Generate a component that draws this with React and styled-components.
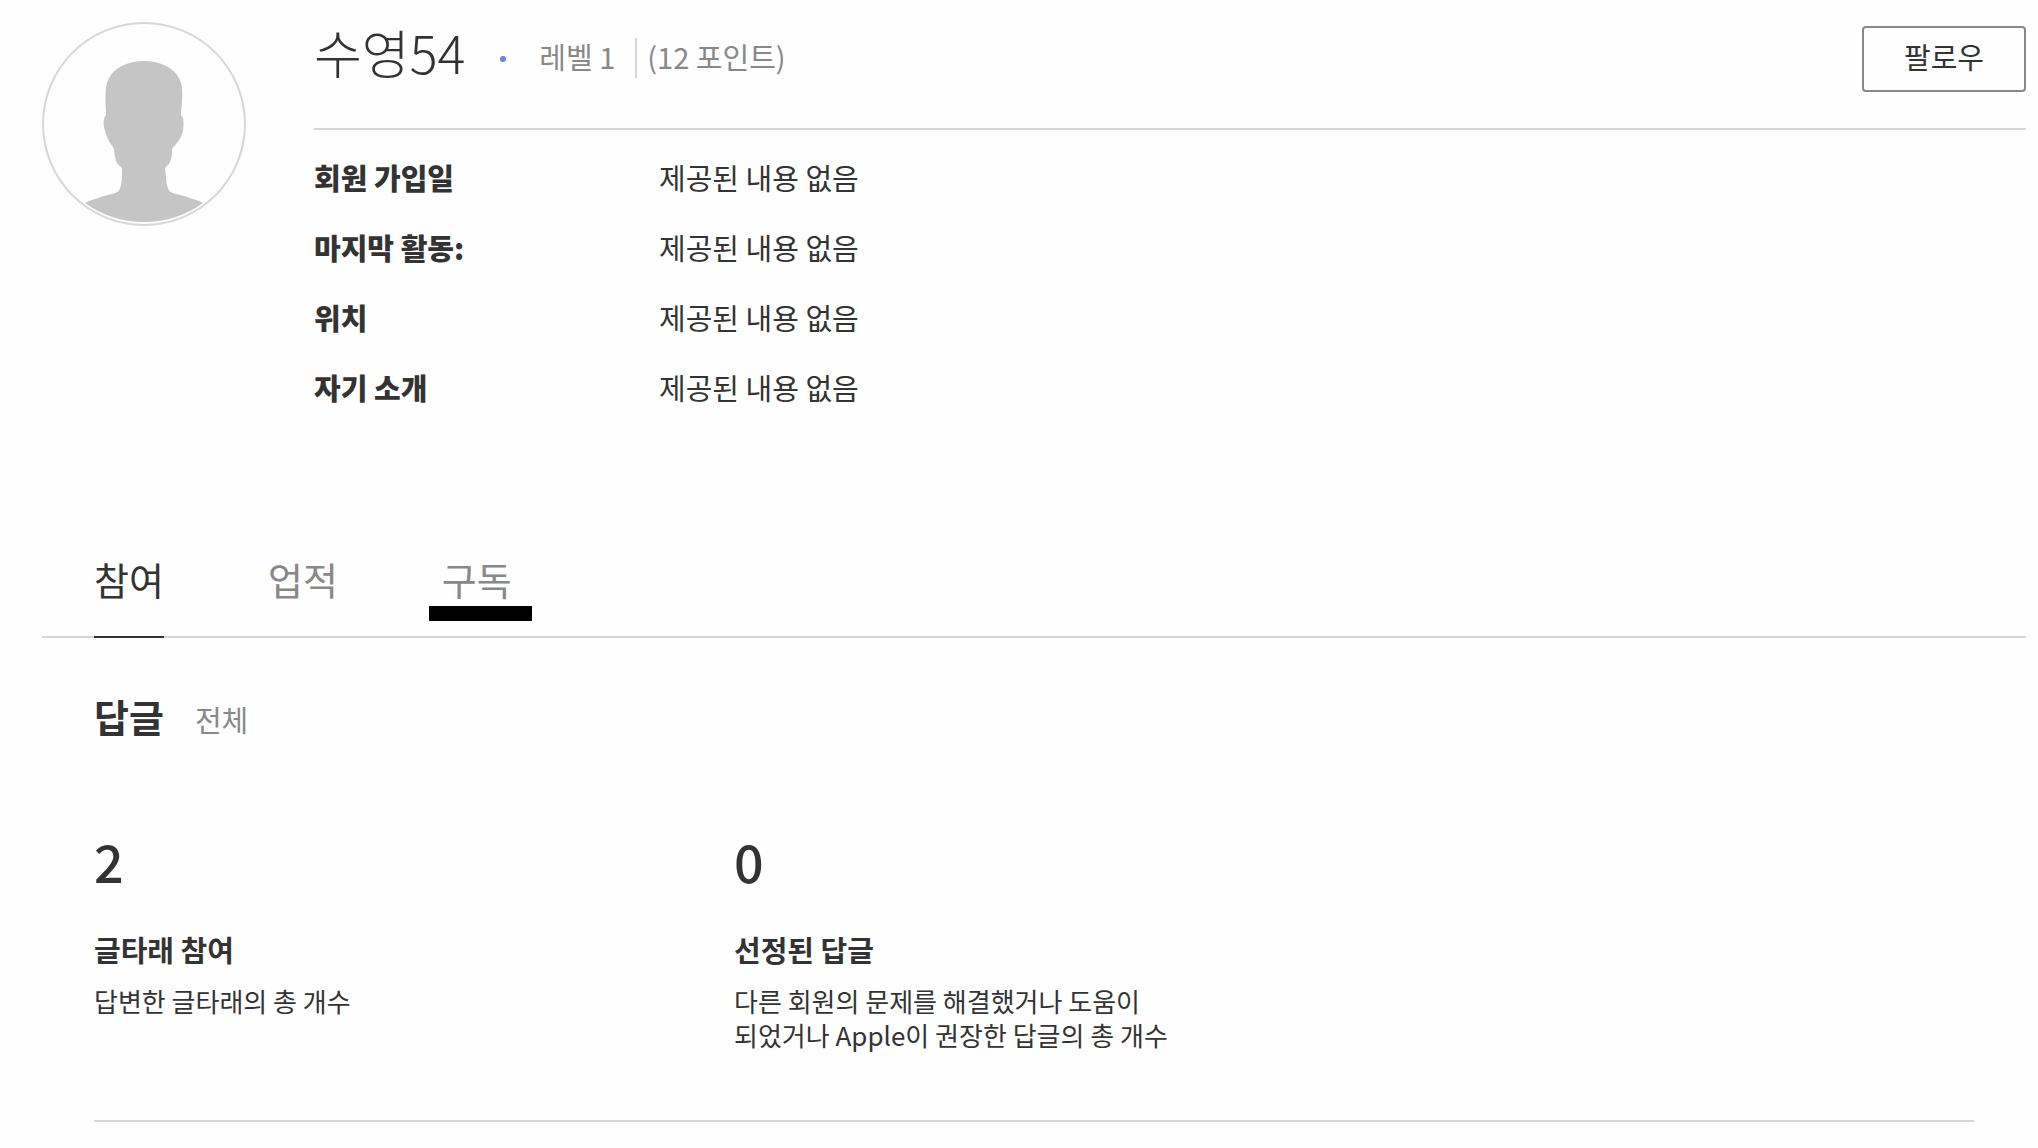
import React, { useState } from 'react';
import styled, { createGlobalStyle } from 'styled-components';

const details = [
  { label: '회원 가입일', value: '제공된 내용 없음' },
  { label: '마지막 활동:', value: '제공된 내용 없음' },
  { label: '위치', value: '제공된 내용 없음' },
  { label: '자기 소개', value: '제공된 내용 없음' },
];

const tabs = ['참여', '업적', '구독'];

const stats = [
  { count: 2, title: '글타래 참여', text: '답변한 글타래의 총 개수' },
  {
    count: 0,
    title: '선정된 답글',
    text: '다른 회원의 문제를 해결했거나 도움이 되었거나 Apple이 권장한 답글의 총 개수',
  },
];

function Silhouette() {
  return (
    <svg viewBox="0 0 204 204" width="100%" height="100%" aria-hidden="true">
      <path
        fill="#c5c5c5"
        d="M102 39C86 39 72 46 67 56C63 63 63 73 64 91L64 93C61 96 61 102 63 109C65 117 69 122 72 127C73 136 73 141 80 146C80 153 80 159 79 163C78 169 75 171 70 172C59 175 51 177 43 181C59 193 80 200 102 200C124 200 145 193 161 181C153 177 145 175 134 172C129 171 126 169 125 163C124 159 124 153 123 146C129 141 130 136 130 127C134 122 139 117 141 109C142 102 142 96 139 93L139 91C141 73 141 63 137 56C132 46 118 39 102 39Z"
      />
    </svg>
  );
}

function App() {
  const [active, setActive] = useState('참여');

  return (
    <>
      <GlobalStyle />
      <Page>
        <Profile>
          <Avatar>
            <Silhouette />
          </Avatar>
          <Info>
            <TopRow>
              <Name>수영54</Name>
              <Dot />
              <Level>레벨 1</Level>
              <Points>(12 포인트)</Points>
              <FollowButton type="button">팔로우</FollowButton>
            </TopRow>
            <Details>
              {details.map((item) => (
                <DetailRow key={item.label}>
                  <DetailLabel>{item.label}</DetailLabel>
                  <DetailValue>{item.value}</DetailValue>
                </DetailRow>
              ))}
            </Details>
          </Info>
        </Profile>

        <TabList role="tablist">
          {tabs.map((tab) => (
            <Tab
              key={tab}
              type="button"
              role="tab"
              aria-selected={active === tab}
              $active={active === tab}
              onClick={() => setActive(tab)}
            >
              {tab}
              {tab === '구독' && <Marker />}
            </Tab>
          ))}
        </TabList>

        <Section>
          <SectionHead>
            <SectionTitle>답글</SectionTitle>
            <SectionNote>전체</SectionNote>
          </SectionHead>
          <Stats>
            {stats.map((stat) => (
              <Stat key={stat.title}>
                <StatCount>{stat.count}</StatCount>
                <StatTitle>{stat.title}</StatTitle>
                <StatText>{stat.text}</StatText>
              </Stat>
            ))}
          </Stats>
        </Section>
      </Page>
    </>
  );
}

const GlobalStyle = createGlobalStyle`
  * {
    box-sizing: border-box;
  }

  body {
    margin: 0;
    color: #333;
    background-color: #fefefe;
    font-family: 'Noto Sans CJK KR', sans-serif;
    font-size: 29px;
    line-height: 40px;
    word-break: keep-all;
  }
`;

const Page = styled.main`
  padding: 22px 12px 24px 42px;
`;

const Profile = styled.section`
  display: flex;
  gap: 68px;
`;

const Avatar = styled.div`
  flex: none;
  width: 204px;
  height: 204px;
  border-radius: 50%;
  box-shadow: inset 0 0 0 2px #d6d6d6;
`;

const Info = styled.div`
  flex: 1;
`;

const TopRow = styled.header`
  display: flex;
  align-items: flex-start;
  height: 108px;
  border-bottom: 2px solid #d6d6d6;
`;

const Name = styled.h1`
  margin: 0;
  font-size: 52px;
  font-weight: 200;
  line-height: 60px;
`;

const Dot = styled.span`
  width: 6px;
  height: 6px;
  margin: 34px 33px 0 35px;
  border-radius: 50%;
  background-color: #6384e0;
`;

const Level = styled.span`
  margin-top: 16px;
  padding-right: 20px;
  color: #888;
  line-height: 36px;
`;

const Points = styled.span`
  margin-top: 16px;
  padding: 0 0 4px 10px;
  border-left: 2px solid #d6d6d6;
  color: #888;
  line-height: 36px;
`;

const FollowButton = styled.button`
  height: 66px;
  margin: 4px 0 0 auto;
  padding: 0 40px 6px;
  border: 2px solid #888;
  border-radius: 4px;
  color: #333;
  background: none;
  font: inherit;
  cursor: pointer;
`;

const Details = styled.dl`
  margin: 27px 0 0;
`;

const DetailRow = styled.div`
  display: grid;
  grid-template-columns: 345px 1fr;
  margin-bottom: 30px;
`;

const DetailLabel = styled.dt`
  font-weight: 900;
`;

const DetailValue = styled.dd`
  margin: 0;
`;

const TabList = styled.div`
  display: flex;
  gap: 104px;
  margin-top: 111px;
  padding-left: 52px;
  border-bottom: 2px solid #d6d6d6;
`;

const Tab = styled.button`
  position: relative;
  height: 90px;
  margin-bottom: -2px;
  padding: 0 0 26px;
  border: none;
  border-bottom: 2px solid ${(props) => (props.$active ? '#333' : 'transparent')};
  color: ${(props) => (props.$active ? '#333' : '#888')};
  background: none;
  font-family: inherit;
  font-size: 38px;
  line-height: 56px;
  cursor: pointer;
`;

const Marker = styled.span`
  position: absolute;
  left: -13px;
  right: -20px;
  bottom: 15px;
  height: 15px;
  background-color: #000;
`;

const Section = styled.section`
  margin: 0 52px;
  padding: 50px 0 68px;
  border-bottom: 2px solid #d6d6d6;
`;

const SectionHead = styled.div`
  display: flex;
  align-items: baseline;
  gap: 31px;
`;

const SectionTitle = styled.h2`
  margin: 0;
  font-size: 38px;
  font-weight: 700;
  line-height: 56px;
`;

const SectionNote = styled.span`
  color: #888;
`;

const Stats = styled.div`
  display: grid;
  grid-template-columns: repeat(3, 1fr);
  gap: 40px;
  margin-top: 87px;
`;

const Stat = styled.div`
  max-width: 470px;
`;

const StatCount = styled.div`
  font-size: 52px;
  font-weight: 500;
  line-height: 60px;
`;

const StatTitle = styled.h3`
  margin: 38px 0 15px;
  font-size: 29px;
  font-weight: 700;
`;

const StatText = styled.p`
  margin: 0;
  font-size: 26px;
  line-height: 34px;
`;

export default App;
